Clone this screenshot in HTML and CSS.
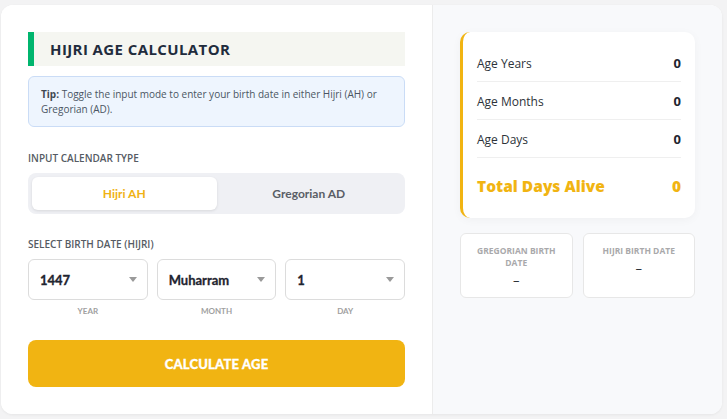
FILE: index.html
```html
<!DOCTYPE html>
<html lang="en">
<head>
    <meta charset="UTF-8">
    <meta name="viewport" content="width=device-width, initial-scale=1.0">
    <title>Hijri Age Calculator</title>
    <link rel="stylesheet" href="styles.css">
</head>
<body>
    <div class="calculator">
        <div class="input-panel">
            <h1 class="calc-title">HIJRI AGE CALCULATOR</h1>

            <div class="tip-box">
                <p class="tip-text"><strong>Tip:</strong> Toggle the input mode to enter your birth date in either Hijri (AH) or Gregorian (AD).</p>
            </div>

            <div class="field-label">INPUT CALENDAR TYPE</div>
            <div class="mode-toggle">
                <button class="mode-btn active">Hijri AH</button>
                <button class="mode-btn">Gregorian AD</button>
            </div>

            <div class="field-label">SELECT BIRTH DATE (HIJRI)</div>
            <div class="date-selects">
                <div class="select-group">
                    <div class="select-wrap">
                        <select class="date-select">
                            <option>1447</option>
                        </select>
                    </div>
                    <span class="select-caption">YEAR</span>
                </div>
                <div class="select-group">
                    <div class="select-wrap">
                        <select class="date-select">
                            <option>Muharram</option>
                        </select>
                    </div>
                    <span class="select-caption">MONTH</span>
                </div>
                <div class="select-group">
                    <div class="select-wrap">
                        <select class="date-select">
                            <option>1</option>
                        </select>
                    </div>
                    <span class="select-caption">DAY</span>
                </div>
            </div>

            <button class="calc-btn">CALCULATE AGE</button>
        </div>

        <div class="result-panel">
            <div class="result-card">
                <div class="result-row">
                    <span class="result-label">Age Years</span>
                    <span class="result-value">0</span>
                </div>
                <div class="result-row">
                    <span class="result-label">Age Months</span>
                    <span class="result-value">0</span>
                </div>
                <div class="result-row">
                    <span class="result-label">Age Days</span>
                    <span class="result-value">0</span>
                </div>
                <div class="result-row total-row">
                    <span class="result-label">Total Days Alive</span>
                    <span class="result-value">0</span>
                </div>
            </div>

            <div class="birth-dates">
                <div class="birth-card">
                    <div class="birth-title">GREGORIAN BIRTH DATE</div>
                    <div class="birth-value">–</div>
                </div>
                <div class="birth-card">
                    <div class="birth-title">HIJRI BIRTH DATE</div>
                    <div class="birth-value">–</div>
                </div>
            </div>
        </div>
    </div>
</body>
</html>
```

FILE: styles.css
```css
* {
    box-sizing: border-box;
}

body {
    margin: 0;
    padding: 5px 5px 5px 1px;
    font-family: 'Open Sans', 'Liberation Sans', sans-serif;
    color: #333;
    background-color: #f3f3f4;
}

.calculator {
    display: flex;
    width: 721px;
    background: white;
    border-radius: 12px;
    overflow: hidden;
    box-shadow: 0 1px 3px rgba(0, 0, 0, 0.06);
}

/* left side */
.input-panel {
    width: 432px;
    padding: 27px;
    border-right: 1px solid #ececec;
    background: white;
}

.calc-title {
    margin: 0;
    height: 34px;
    line-height: 34px;
    padding-left: 16px;
    border-left: 6px solid #00b56e;
    background-color: #f5f6f1;
    font-size: 15px;
    font-weight: 700;
    letter-spacing: 0.4px;
    color: #1f2c3d;
}

.tip-box {
    margin-top: 10px;
    padding: 10px 12px;
    background-color: #eef5fe;
    border: 1px solid #cadcf6;
    border-radius: 6px;
}

.tip-text {
    margin: 0;
    font-size: 10px;
    line-height: 14.5px;
    color: #4b5563;
}

.tip-text strong {
    font-weight: 700;
    color: #3f4852;
}

.field-label {
    margin-top: 24px;
    margin-bottom: 8px;
    font-size: 10px;
    line-height: 14px;
    font-weight: 600;
    color: #555b63;
}

.mode-toggle {
    display: flex;
    padding: 4px;
    background-color: #eff0f4;
    border-radius: 8px;
}

.mode-toggle + .field-label {
    margin-top: 23px;
}

.mode-btn {
    flex: 1;
    height: 33px;
    border: none;
    border-radius: 6px;
    background: transparent;
    font-family: 'Lato', 'Liberation Sans', sans-serif;
    font-size: 12px;
    font-weight: 700;
    color: #5a5e66;
    cursor: pointer;
}

.mode-btn.active {
    background: white;
    color: #f0b214;
    box-shadow: 0 1px 3px rgba(0, 0, 0, 0.1);
}

.date-selects {
    display: flex;
    gap: 9px;
}

.select-group {
    flex: 1;
    display: flex;
    flex-direction: column;
    align-items: center;
}

.select-wrap {
    position: relative;
    width: 100%;
}

.select-wrap::after {
    content: '';
    position: absolute;
    right: 11px;
    top: 18px;
    border-left: 4.5px solid transparent;
    border-right: 4.5px solid transparent;
    border-top: 5px solid #9a9a9a;
    pointer-events: none;
}

.date-select {
    width: 100%;
    height: 41px;
    padding: 0 11px;
    border: 1px solid #dcdcdc;
    border-radius: 6px;
    background: white;
    appearance: none;
    -webkit-appearance: none;
    font-family: 'Lato', 'Liberation Sans', sans-serif;
    font-size: 13px;
    font-weight: 700;
    -webkit-text-stroke: 0.3px #1f2530;
    color: #1f2530;
}

.select-caption {
    margin-top: 6px;
    font-family: 'Lato', 'Liberation Sans', sans-serif;
    font-size: 8px;
    font-weight: 700;
    color: #a0a0a0;
}

.calc-btn {
    display: block;
    width: 100%;
    height: 47px;
    margin-top: 24px;
    border: none;
    border-radius: 8px;
    background-color: #f1b412;
    font-family: 'Lato', 'Liberation Sans', sans-serif;
    font-size: 13px;
    font-weight: 900;
    letter-spacing: 0.2px;
    -webkit-text-stroke: 0.3px white;
    color: white;
    cursor: pointer;
}

/* right side */
.result-panel {
    flex: 1;
    padding: 27px;
    background-color: #f8f9fb;
}

.result-card {
    padding: 12px 14px 6px 14px;
    background: white;
    border-left: 3px solid #f1b412;
    border-radius: 10px;
    box-shadow: 0 2px 10px rgba(0, 0, 0, 0.04);
}

.result-row {
    display: flex;
    justify-content: space-between;
    align-items: center;
    height: 38px;
    padding-top: 1px;
    border-bottom: 1px solid #efefef;
}

.result-label {
    font-size: 12px;
    color: #2d333a;
}

.result-value {
    font-size: 13px;
    font-weight: 700;
    color: #1f2530;
}

.total-row {
    height: 54px;
    border-bottom: none;
}

.total-row .result-label,
.total-row .result-value {
    font-size: 15.5px;
    font-weight: 800;
    color: #f1b412;
}

.birth-dates {
    display: flex;
    gap: 10px;
    margin-top: 15px;
}

.birth-card {
    flex: 1;
    height: 65px;
    padding: 11px 12px 0;
    background: white;
    border: 1px solid #e7e7e7;
    border-radius: 6px;
    text-align: center;
}

.birth-title {
    font-size: 8.5px;
    line-height: 12px;
    font-weight: 700;
    color: #a9a9ab;
}

.birth-value {
    margin-top: 4px;
    font-size: 13px;
    line-height: 14px;
    color: #2d333a;
}
```
